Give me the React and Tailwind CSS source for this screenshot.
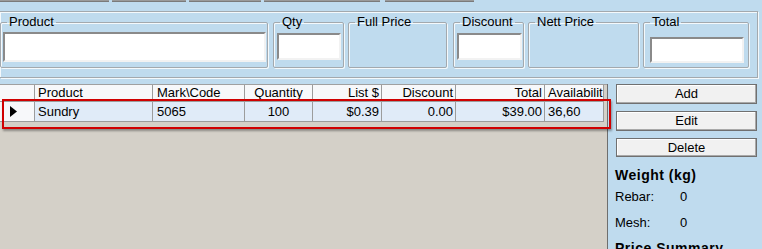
const TABS = [
  { w: "w-[109px]", ml: "ml-0" },
  { w: "w-[74px]", ml: "ml-[3px]" },
  { w: "w-[72px]", ml: "ml-[3px]" },
  { w: "w-[116px]", ml: "ml-[3px]" },
  { w: "w-[89px]", ml: "ml-[5px]" },
];

const COLS = [
  { key: "ind", label: "", w: "w-[35px]", align: "justify-start" },
  { key: "product", label: "Product", w: "w-[118px]", align: "justify-start pl-[3px]" },
  { key: "code", label: "Mark\\Code", w: "w-[92px]", align: "justify-start pl-[4px]" },
  { key: "qty", label: "Quantity", w: "w-[68px]", align: "justify-center" },
  { key: "list", label: "List $", w: "w-[69px]", align: "justify-end pr-[2px]" },
  { key: "disc", label: "Discount", w: "w-[74px]", align: "justify-end pr-[2px]" },
  { key: "total", label: "Total", w: "w-[89px]", align: "justify-end pr-[2px]" },
  { key: "avail", label: "Availabilit", w: "w-[59px]", align: "justify-start pl-[3px]" },
];

const ROW = {
  product: "Sundry",
  code: "5065",
  qty: "100",
  list: "$0.39",
  disc: "0.00",
  total: "$39.00",
  avail: "36,60",
};

const INPUT =
  "bg-white border-2 border-t-[#8a8a8a] border-l-[#8a8a8a] border-b-[#f2f2f2] border-r-[#f2f2f2]";
const GROUP =
  "h-[53px] border border-[#a3a9ae] rounded-[2px] shadow-[inset_1px_1px_0_#f4f9fc,1px_1px_0_#f4f9fc]";

function Group({ label, className, children }) {
  return (
    <fieldset className={`${GROUP} ${className}`}>
      <legend className="ml-[6px] px-[2px] text-[13px] leading-[14px]">{label}</legend>
      {children}
    </fieldset>
  );
}

function Button({ children, className }) {
  return (
    <div
      className={`w-[141px] flex items-center justify-center bg-[#f1f1f1] border border-[#707070] shadow-[inset_-1px_-1px_0_#a9a9a9,inset_1px_1px_0_#ffffff] text-[13px] ${className}`}
    >
      {children}
    </div>
  );
}

export default function App() {
  return (
    <div
      className="relative w-[762px] h-[249px] overflow-hidden bg-[#bfdbee] text-black flex flex-col"
      style={{ fontFamily: '"Liberation Sans", Arial, sans-serif' }}
    >
      {/* button bottoms of the row above */}
      <div className="flex h-[11px]">
        {TABS.map((t, i) => (
          <div key={i} className={`${t.w} ${t.ml} h-[2px] bg-[#9a9a9a] border-b border-[#7a7a7a]`} />
        ))}
      </div>

      {/* entry panel */}
      <div className="w-[758px] h-[67px] border border-l-0 border-[#a3a9ae] shadow-[inset_1px_1px_0_#f4f9fc,1px_1px_0_#f4f9fc] pt-[3px] flex">
        <Group label="Product" className="w-[268px]">
          <div className={`${INPUT} ml-[2px] mt-[3px] w-[263px] h-[30px]`} />
        </Group>
        <Group label="Qty" className="w-[71px] ml-[5px]">
          <div className={`${INPUT} ml-[3px] mt-[4px] w-[64px] h-[27px]`} />
        </Group>
        <Group label="Full Price" className="w-[99px] ml-[4px]" />
        <Group label="Discount" className="w-[71px] ml-[6px]">
          <div className={`${INPUT} ml-[3px] mt-[4px] w-[65px] h-[27px]`} />
        </Group>
        <Group label="Nett Price" className="w-[111px] ml-[4px]" />
        <Group label="Total" className="w-[106px] ml-[4px]">
          <div className={`${INPUT} ml-[6px] mt-[8px] w-[94px] h-[26px]`} />
        </Group>
      </div>

      <div className="h-[6px]" />

      <div className="flex flex-1 min-h-0">
        {/* grid */}
        <div className="w-[608px] bg-[#d4d0c8] border-r border-[#6e6e6e] flex flex-col text-[13px]">
          <div className="flex h-[18px] border-t border-[#a0a0a0]">
            {COLS.map((c) => (
              <div
                key={c.key}
                className={`${c.w} ${c.align} flex items-center overflow-hidden whitespace-nowrap bg-[#f7f8fa] border-r border-b border-[#9c9c9c]`}
              >
                {c.label}
              </div>
            ))}
          </div>
          <div className="flex h-[20px]">
            {COLS.map((c) => (
              <div
                key={c.key}
                className={`${c.w} ${c.key === "ind" ? "justify-start pl-[10px] bg-[#f7f8fa]" : `${c.align} bg-[#e0ebf8]`} flex items-center overflow-hidden whitespace-nowrap border-r border-b border-[#9c9c9c]`}
              >
                {c.key === "ind" ? (
                  <svg width="7" height="11" viewBox="0 0 7 11">
                    <path d="M0 0 L7 5.5 L0 11 Z" fill="#000" />
                  </svg>
                ) : (
                  ROW[c.key]
                )}
              </div>
            ))}
          </div>
        </div>

        {/* side panel */}
        <div className="flex-1 flex flex-col pl-[8px]">
          <Button className="h-[20px]">Add</Button>
          <Button className="h-[20px] mt-[7px]">Edit</Button>
          <Button className="h-[19px] mt-[7px]">Delete</Button>
          <div className="ml-[-1px] mt-[10px] text-[14px] leading-[16px] font-bold tracking-[0.5px]">Weight (kg)</div>
          <div className="ml-[-1px] mt-[6px] flex text-[13px] leading-[16px]">
            <span className="w-[65px]">Rebar:</span>
            <span>0</span>
          </div>
          <div className="ml-[-1px] mt-[10px] flex text-[13px] leading-[16px]">
            <span className="w-[65px]">Mesh:</span>
            <span>0</span>
          </div>
          <div className="ml-[-1px] mt-[9px] text-[14px] leading-[16px] font-bold tracking-[0.5px] whitespace-nowrap">
            Price Summary
          </div>
        </div>
      </div>

      {/* red highlight annotation */}
      <div className="absolute left-[2px] top-[99px] w-[609px] h-[30px] border-2 border-[#d00000] shadow-[1px_2px_2px_rgba(0,0,0,0.35)]" />
    </div>
  );
}
